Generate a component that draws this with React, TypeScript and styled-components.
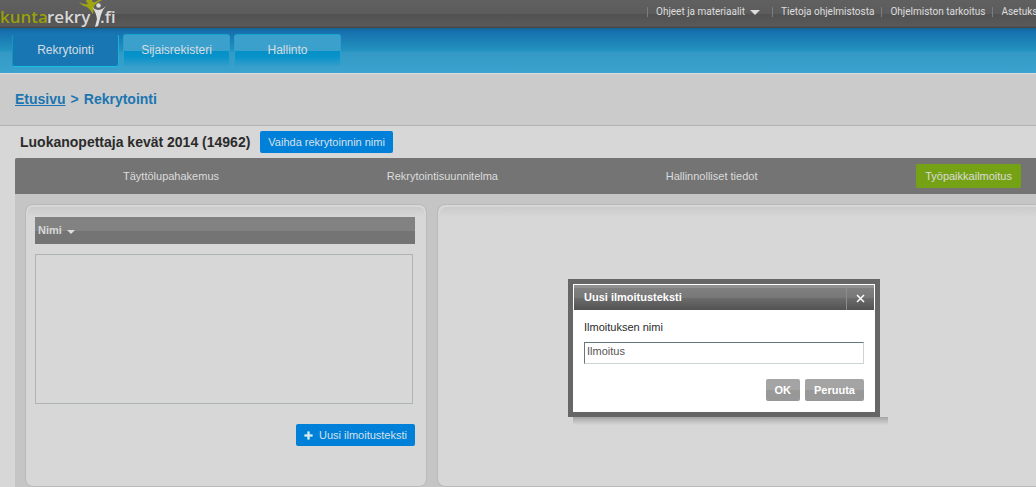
import React, { useState } from "react";
import styled, { createGlobalStyle, css } from "styled-components";

const GlobalStyle = createGlobalStyle`
  *, *::before, *::after { box-sizing: border-box; }
  body {
    margin: 0;
    background: #d7d7d7;
    color: #2b2b2b;
    font: 11px/14px "Liberation Sans", Arial, sans-serif;
  }
  button, input { font: inherit; }
`;

const Page = styled.div`
  display: flex;
  flex-direction: column;
  min-height: 100vh;
  overflow: hidden;
`;

const TopBar = styled.header`
  display: flex;
  justify-content: space-between;
  height: 28px;
  background: linear-gradient(#606060, #5c5c5c 50%, #515151 50%, #595959 92%, #444);
`;

const Logo = styled.svg`
  display: block;
  flex: none;
`;

const TopNav = styled.nav`
  display: flex;
  align-items: center;
  width: 389px;
  height: 24px;
  overflow: hidden;
`;

const TopLink = styled.a<{ $menu?: boolean }>`
  display: flex;
  align-items: center;
  flex: none;
  gap: 5px;
  padding: 0 ${(p) => (p.$menu ? 12 : 7)}px 0 8px;
  height: 10px;
  border-left: 1px solid #7d7d7d;
  color: #dcdcdc;
  font: 10px/12px Roboto, sans-serif;
  text-decoration: none;
  white-space: nowrap;
`;

const Caret = styled.span<{ $size: number }>`
  border: ${(p) => p.$size}px solid transparent;
  border-top-color: #dcdcdc;
  border-bottom: 0;
`;

const MainTabs = styled.nav`
  display: flex;
  gap: 4px;
  height: 45px;
  padding: 6px 12px;
  background: linear-gradient(#17628f, #166fad 3px, #2394c0 23px, #3498c5 24px, #3aa3ce);
`;

const MainTab = styled.a<{ $active?: boolean }>`
  width: 107px;
  height: 33px;
  border: 1px solid #169fc9;
  border-radius: 3px;
  color: #d6dde2;
  font-size: 12px;
  line-height: 30px;
  text-align: center;
  text-decoration: none;
  ${(p) =>
    p.$active
      ? css`
          border-color: #1678b2 #16b4dc #16c0e0 #1594c4;
          background: #1877b3;
        `
      : css`
          border-width: 1px 1px 0;
          border-color: #16a3d0 #2ba0cd;
          background: linear-gradient(#3ba1cc 16px, #0490c8 16px, #0993ca 22px, #3a9fcb);
        `}
`;

const Breadcrumb = styled.nav`
  display: flex;
  gap: 5px;
  height: 53px;
  padding: 0 15px;
  border-top: 1px solid #dcdcdc;
  border-bottom: 1px solid #b3b3b3;
  background: #cbcbcb;
  color: #1b75b1;
  font-size: 14px;
  font-weight: bold;
  line-height: 50px;
`;

const CrumbLink = styled.a`
  color: inherit;
`;

const TitleRow = styled.div`
  display: flex;
  align-items: center;
  gap: 10px;
  height: 32px;
  padding-left: 20px;
`;

const Title = styled.h1`
  margin: 0;
  font-size: 14px;
  line-height: 18px;
`;

const BlueButton = styled.button`
  display: flex;
  align-items: center;
  gap: 6px;
  height: 22px;
  padding: 0 8px;
  border: 0;
  border-radius: 2px;
  background: #0080d8;
  color: #d9e1e8;
  white-space: nowrap;
`;

const Workspace = styled.main`
  display: flex;
  flex-direction: column;
  flex: 1;
  margin-left: 15px;
  background: #c5c5c5;
`;

const Steps = styled.nav`
  display: flex;
  align-items: center;
  justify-content: space-between;
  height: 36px;
  padding: 0 15px 0 99px;
  border-radius: 2px 0 0 0;
  background: #747474;
`;

const Step = styled.a<{ $active?: boolean }>`
  padding: 5px 9px;
  border-radius: 2px;
  background: ${(p) => (p.$active ? "#75a214" : "transparent")};
  color: #dcdcdc;
  text-decoration: none;
  white-space: nowrap;
`;

const Panels = styled.div`
  display: flex;
  flex: 1;
  gap: 10px;
  padding: 10px 0 0 10px;
`;

const panel = css`
  border: 1px solid #bababa;
  background: linear-gradient(#d7d7d7 2px, #cbcbcb 2px, #d7d7d7 12px);
`;

const ListPanel = styled.section`
  ${panel}
  display: flex;
  flex-direction: column;
  width: 402px;
  padding: 12px 11px 40px 9px;
  border-radius: 8px;
  box-shadow: inset 0 0 0 2px #d7d7d7;
`;

const ContentPanel = styled.section`
  ${panel}
  flex: 1;
  border-right: 0;
  border-radius: 8px 0 0 8px;
  box-shadow: inset 2px 2px 0 #d7d7d7;
`;

const ListHeader = styled.button`
  display: flex;
  align-items: center;
  gap: 5px;
  height: 27px;
  padding: 0 3px 1px;
  border: 0;
  background: linear-gradient(#828282 14px, #747474 14px);
  color: #d8d8d8;
  font-weight: bold;

  ${Caret} {
    margin-top: 3px;
  }
`;

const List = styled.div`
  height: 150px;
  margin: 10px 2px 20px 0;
  border: 1px solid #aeb4b4;
`;

const ListActions = styled.div`
  display: flex;
  justify-content: flex-end;
`;

const Dialog = styled.form`
  position: absolute;
  top: 279px;
  left: 568px;
  width: 312px;
  border: 5px solid #666;
  background: #fff;

  &::after {
    content: "";
    position: absolute;
    top: 100%;
    left: 0;
    right: -13px;
    height: 8px;
    margin-top: 5px;
    background: linear-gradient(#a4a4a4, #d7d7d7);
  }
`;

const DialogHeader = styled.div`
  display: flex;
  justify-content: space-between;
  height: 25px;
  margin: 1px 1px 0;
  background: linear-gradient(#909090 3px, #808080 3px, #777 13px, #6c6c6c 13px, #525252);
  color: #fff;
`;

const DialogTitle = styled.h2`
  margin: 0;
  padding-left: 10px;
  font-size: 11px;
  line-height: 25px;
`;

const CloseButton = styled.button`
  display: flex;
  align-items: center;
  justify-content: center;
  width: 28px;
  padding: 2px 0 0;
  border: 0;
  border-left: 1px solid #8c8c8c;
  background: transparent;
  color: #fff;
`;

const DialogBody = styled.div`
  display: flex;
  flex-direction: column;
  gap: 8px;
  padding: 10px 11px 11px;
`;

const NameInput = styled.input`
  height: 22px;
  padding: 0 2px 4px;
  border: 1px solid;
  border-color: #64777a #cdd4d5 #cdd4d5 #64777a;
  border-radius: 0;
  outline: 0;
  background: #fff;
  color: #555;
`;

const DialogActions = styled.div`
  display: flex;
  justify-content: flex-end;
  gap: 5px;
  padding-top: 7px;
`;

const GrayButton = styled.button`
  height: 22px;
  padding: 0 9px;
  border: 0;
  border-radius: 2px;
  background: linear-gradient(#a4a4a4 50%, #989898 50%);
  color: #fff;
  font-weight: bold;
`;

function BrandLogo() {
  return (
    <Logo width="120" height="28" viewBox="0 0 120 28" role="img" aria-label="kuntarekry.fi">
      <g fontFamily="'Open Sans', sans-serif" fontSize="17" fontWeight="600">
        <text x="0" y="23" fill="#98a00c">kunta</text>
        <text x="47" y="23" fill="#d8d8d8">rekry</text>
        <text x="100" y="23" fill="#d8d8d8">.fi</text>
      </g>
      <path d="M79 2Q84 5 88 4Q86 2 86 0H92Q92 3 95 2L99 0H102Q96 3 94 6L93 14Q90 9 87 7Q82 6 79 2Z" fill="#a0a512" />
      <circle cx="98.500" cy="5.500" r="2.300" fill="#dedede" />
      <path d="M92 7Q95 10 98 10Q102 10 106 6Q102 10 101 15L98 26L95 27L97 19Q96 12 92 7Z" fill="#dedede" />
    </Logo>
  );
}

export default function App() {
  const [name, setName] = useState("Ilmoitus");

  return (
    <Page>
      <GlobalStyle />
      <TopBar>
        <BrandLogo />
        <TopNav>
          <TopLink href="#ohjeet" $menu>
            Ohjeet ja materiaalit
            <Caret $size={5} />
          </TopLink>
          <TopLink href="#tietoja">Tietoja ohjelmistosta</TopLink>
          <TopLink href="#tarkoitus">Ohjelmiston tarkoitus</TopLink>
          <TopLink href="#asetukset">Asetukset</TopLink>
        </TopNav>
      </TopBar>

      <MainTabs>
        <MainTab href="#rekrytointi" $active>Rekrytointi</MainTab>
        <MainTab href="#sijaisrekisteri">Sijaisrekisteri</MainTab>
        <MainTab href="#hallinto">Hallinto</MainTab>
      </MainTabs>

      <Breadcrumb>
        <CrumbLink href="#etusivu">Etusivu</CrumbLink>
        <span>&gt;</span>
        <span>Rekrytointi</span>
      </Breadcrumb>

      <TitleRow>
        <Title>Luokanopettaja kevät 2014 (14962)</Title>
        <BlueButton type="button">Vaihda rekrytoinnin nimi</BlueButton>
      </TitleRow>

      <Workspace>
        <Steps>
          <Step href="#tayttolupa">Täyttölupahakemus</Step>
          <Step href="#suunnitelma">Rekrytointisuunnitelma</Step>
          <Step href="#hallinnolliset">Hallinnolliset tiedot</Step>
          <Step href="#ilmoitus" $active>Työpaikkailmoitus</Step>
        </Steps>
        <Panels>
          <ListPanel>
            <ListHeader type="button">
              Nimi
              <Caret $size={4} />
            </ListHeader>
            <List />
            <ListActions>
              <BlueButton type="button">
                <svg width="9" height="9" viewBox="0 0 9 9" aria-hidden="true">
                  <path d="M3 0H6V3H9V6H6V9H3V6H0V3H3Z" fill="#3fb0e0" />
                  <path d="M4 1H5V4H8V5H5V8H4V5H1V4H4Z" fill="#e0e8ec" stroke="#e0e8ec" />
                </svg>
                Uusi ilmoitusteksti
              </BlueButton>
            </ListActions>
          </ListPanel>
          <ContentPanel />
        </Panels>
      </Workspace>

      <Dialog role="dialog" aria-labelledby="dialog-title" onSubmit={(e) => e.preventDefault()}>
        <DialogHeader>
          <DialogTitle id="dialog-title">Uusi ilmoitusteksti</DialogTitle>
          <CloseButton type="button" aria-label="Sulje">
            <svg width="9" height="9" viewBox="0 0 9 9" aria-hidden="true">
              <path d="M1 1L8 8M8 1L1 8" stroke="#fff" strokeWidth="1.500" />
            </svg>
          </CloseButton>
        </DialogHeader>
        <DialogBody>
          <label htmlFor="notice-name">Ilmoituksen nimi</label>
          <NameInput id="notice-name" value={name} onChange={(e) => setName(e.target.value)} />
          <DialogActions>
            <GrayButton type="submit">OK</GrayButton>
            <GrayButton type="button">Peruuta</GrayButton>
          </DialogActions>
        </DialogBody>
      </Dialog>
    </Page>
  );
}
